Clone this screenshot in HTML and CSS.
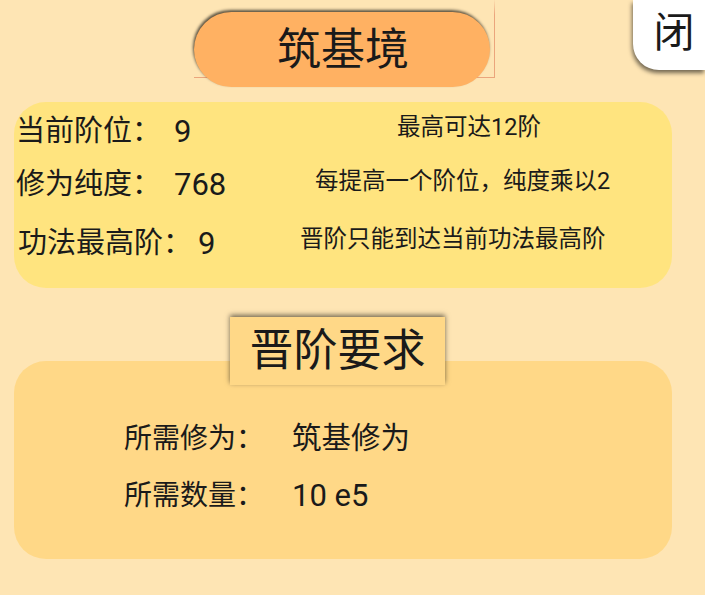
FILE: index.html
```html
<!DOCTYPE html>
<html lang="zh">
<head>
<meta charset="utf-8">
<link rel="stylesheet" href="styles.css">
</head>
<body>
<div class="page">
  <header class="top">
    <div class="title-frame">
      <div class="title-pill">筑基境</div>
    </div>
    <div class="close-btn">闭</div>
  </header>

  <section class="card card-info">
    <div class="row row-1">
      <div class="stat"><span class="label">当前阶位：</span><span class="value v1">9</span></div>
      <div class="note n1">最高可达12阶</div>
    </div>
    <div class="row row-2">
      <div class="stat"><span class="label">修为纯度：</span><span class="value v2">768</span></div>
      <div class="note n2">每提高一个阶位，纯度乘以2</div>
    </div>
    <div class="row row-3">
      <div class="stat s3"><span class="label">功法最高阶：</span><span class="value v3">9</span></div>
      <div class="note n3">晋阶只能到达当前功法最高阶</div>
    </div>
  </section>

  <div class="section-head">晋阶要求</div>

  <section class="card card-req">
    <div class="req-row"><span class="req-label">所需修为：</span><span class="req-value">筑基修为</span></div>
    <div class="req-row"><span class="req-label">所需数量：</span><span class="req-value num">10 e5</span></div>
  </section>
</div>
</body>
</html>
```

FILE: styles.css
```css
html, body {
  margin: 0;
  padding: 0;
}
body {
  background: #fee5b4;
  font-family: "Roboto", "Noto Sans CJK SC", sans-serif;
  color: #1a1a1a;
  width: 705px;
  height: 595px;
  overflow: hidden;
}
.page {
  position: relative;
  width: 705px;
  height: 595px;
}
.top {
  height: 102px;
}
.title-frame {
  margin-left: 194px;
  padding-top: 12px;
  width: 301px;
  height: 78px;
  box-sizing: border-box;
  border-right: 1px solid #eba57c;
  border-bottom: 1px solid #eba57c;
  border-image: linear-gradient(to bottom, rgba(235,165,124,0), #eba57c 20%) 1;
}
.title-pill {
  width: 296px;
  height: 75px;
  border-radius: 38px;
  background: #ffb162;
  box-shadow: -1px -2px 3px rgba(0,0,0,0.65);
  display: flex;
  align-items: center;
  justify-content: center;
  font-size: 44px;
  line-height: 1;
  padding-left: 2px;
  box-sizing: border-box;
}
.close-btn {
  position: absolute;
  top: 0;
  right: 0;
  width: 72px;
  height: 70px;
  background: #ffffff;
  border-bottom-left-radius: 26px;
  box-shadow: -1px 3px 4px rgba(0,0,0,0.55);
  display: flex;
  align-items: center;
  justify-content: center;
  font-size: 41px;
  line-height: 1;
  padding-bottom: 3px;
  padding-left: 10px;
  box-sizing: border-box;
}
.card {
  margin-left: 14px;
  width: 658px;
  border-radius: 32px;
  box-sizing: border-box;
}
.card-info {
  background: #ffe47f;
  height: 186px;
  padding-top: 1px;
}
.row {
  display: flex;
  align-items: center;
}
.row-1 { height: 56px; }
.row-2 { height: 50px; }
.row-3 { height: 68px; }
.stat {
  width: 280px;
  display: flex;
  align-items: center;
  font-size: 29px;
  line-height: 1;
  margin-left: 2px;
}
.stat.s3 { margin-left: 4px; }
.value {
  font-size: 31px;
}
.v1 { margin-left: 13px; }
.v2 { margin-left: 13px; }
.v3 { margin-left: 6px; }
.note {
  font-size: 23.5px;
  line-height: 1;
}
.n1 { margin-left: 101px; margin-top: -6px; }
.n2 { margin-left: 19px; margin-top: -4px; }
.n3 { margin-left: 2px; margin-top: -6px; }

.section-head {
  position: relative;
  z-index: 1;
  margin-top: 29px;
  margin-left: 230px;
  margin-bottom: -24px;
  width: 215px;
  height: 68px;
  background: #ffd887;
  box-shadow: 0 -2px 5px rgba(0,0,0,0.55);
  display: flex;
  align-items: center;
  justify-content: center;
  font-size: 44px;
  line-height: 1;
}
.card-req {
  background: #ffd887;
  height: 198px;
  padding-top: 49px;
  padding-left: 110px;
}
.req-row {
  height: 57px;
  display: flex;
  align-items: center;
  font-size: 28px;
  line-height: 1;
}
.req-label {
  width: 168px;
}
.req-value {
  font-size: 29.5px;
}
.req-value.num {
  font-size: 31px;
}
```
